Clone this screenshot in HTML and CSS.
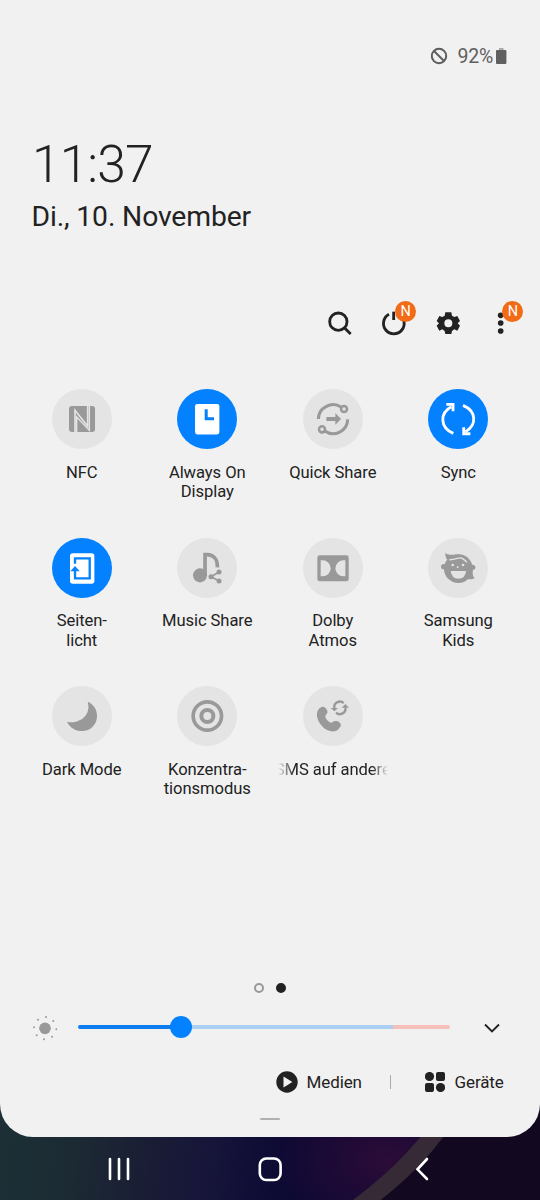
FILE: index.html
```html
<!DOCTYPE html>
<html lang="de">
<head>
<meta charset="utf-8">
<title>Schnelleinstellungen</title>
<link rel="stylesheet" href="styles.css">
</head>
<body>
<main class="panel">
  <div class="status">
    <svg class="status-mute" viewBox="0 0 18 18"><circle cx="9" cy="9" r="7.2"/><path d="M4 4L14 14"/></svg>
    <span class="percent">92%</span>
    <svg class="battery" viewBox="0 0 12 18"><path class="cap" d="M4 1h4.5v2H4z"/><rect x="1" y="3" width="10.4" height="14" rx="1"/></svg>
  </div>
  <header class="clock">
    <div class="time">11:37</div>
    <div class="date">Di., 10. November</div>
  </header>
  <nav class="tools">
    <div class="tool"><svg viewBox="0 0 102 102"><circle class="line" cx="46" cy="47" r="26"/><path class="line" d="M64 65L83 84"/></svg></div>
    <div class="tool"><svg viewBox="0 0 102 102"><path class="line" d="M36 25A31 31 0 1 0 65 25"/><path class="line" d="M50 17V42"/></svg><span class="badge">N</span></div>
    <div class="tool"><svg viewBox="0 0 102 102"><path fill-rule="evenodd" d="M43 19H61L63 29L70 33L79 30L87 45L80 52L87 59L79 74L70 70L63 75L61 84H43L41 75L34 70L25 74L17 59L24 52L17 45L25 30L34 33L41 29ZM52 40A12 12 0 1 0 52 64A12 12 0 1 0 52 40Z"/></svg></div>
    <div class="tool"><svg viewBox="0 0 102 102"><circle cx="50" cy="28" r="8.5"/><circle cx="50" cy="51" r="8.5"/><circle cx="50" cy="75" r="8.5"/></svg><span class="badge">N</span></div>
  </nav>
  <section class="tiles">
    <div class="tile"><svg class="disc" viewBox="0 0 181 181"><rect class="fill" x="51" y="51" width="78" height="78" rx="9"/><path class="cut" d="M69 131V64L107 112V49" stroke-width="5"/><path class="cut" d="M74 131V84L112 124V49" stroke-width="4"/></svg><span>NFC</span></div>
    <div class="tile on"><svg class="disc" viewBox="0 0 181 181"><rect class="fill" x="54" y="45" width="73" height="91" rx="7"/><path class="cut" d="M87.5 61V89.5H111" stroke-width="9"/></svg><span>Always On<br>Display</span></div>
    <div class="tile"><svg class="disc" viewBox="0 0 181 181"><path class="stroke" stroke-width="9" d="M46 90A44 44 0 0 1 115 55M134 91A44 44 0 0 1 65 126"/><circle class="stroke" stroke-width="7.5" cx="123" cy="60" r="9"/><circle class="stroke" stroke-width="7.5" cx="57" cy="121" r="9"/><path class="fill" d="M70 84H97V72L114 90L97 107V96H70Z"/></svg><span>Quick Share</span></div>
    <div class="tile on"><svg class="disc" viewBox="0 0 181 181"><path class="stroke" stroke-width="8.5" d="M76 133C36 117 34 72 70 53M105 49C145 66 148 108 112 128"/><path class="stroke" stroke-width="8.5" d="M55 46H75V67M107 115V134H127"/></svg><span>Sync</span></div>
    <div class="tile on"><svg class="disc" viewBox="0 0 181 181"><rect class="fill" x="54" y="46" width="73" height="91" rx="8"/><path class="cut" d="M69 77V61H113V121H69V92" stroke-width="7"/><path class="cutfill" d="M55 100L69 84L83 100Z"/></svg><span>Seiten-<br>licht</span></div>
    <div class="tile"><svg class="disc" viewBox="0 0 181 181"><circle class="fill" cx="69" cy="112" r="21"/><path class="stroke" stroke-width="11" d="M84 112V50H93C113 52 122 68 121 88"/><path class="stroke" stroke-width="5" d="M126 102L102 116L126 129"/><circle class="fill" cx="102" cy="116" r="7.5"/><circle class="fill" cx="126" cy="102" r="7.5"/><circle class="fill" cx="126" cy="129" r="7.5"/></svg><span>Music Share</span></div>
    <div class="tile"><svg class="disc" viewBox="0 0 181 181"><rect class="fill" x="43" y="52" width="94" height="78" rx="7"/><path class="cutfill" d="M53 67H59A24 24 0 0 1 59 115H53ZM127 67H121A24 24 0 0 0 121 115H127Z"/></svg><span>Dolby<br>Atmos</span></div>
    <div class="tile"><svg class="disc" viewBox="0 0 181 181"><circle class="fill" cx="91" cy="92" r="43"/><circle class="fill" cx="47" cy="86" r="8"/><circle class="fill" cx="134" cy="88" r="8"/><path class="fill" d="M52 45Q58 52 73 50H94L65 70Q51 65 52 45ZM134 92Q132 113 140 121Q130 126 117 122Z"/><path class="cut" stroke-width="4" d="M64 65C78 67 91 58 99 60C105 61 111 67 117 73"/><path class="cutfill" d="M68 99H114Q112 122 91 122Q71 122 68 99Z"/><circle class="cutfill" cx="74" cy="81" r="4"/><circle class="cutfill" cx="105" cy="81" r="4"/><circle class="cutfill" cx="89" cy="88" r="3"/></svg><span>Samsung<br>Kids</span></div>
    <div class="tile"><svg class="disc" viewBox="0 0 181 181"><path class="fill" d="M107 47C125 55 135 70 135 90A45 45 0 0 1 90 135C70 135 52 124 45 107C78 115 119 91 107 47Z"/></svg><span>Dark Mode</span></div>
    <div class="tile"><svg class="disc" viewBox="0 0 181 181"><circle class="stroke" stroke-width="11" cx="91" cy="90" r="42.5"/><circle class="stroke" stroke-width="12" cx="91" cy="90" r="18"/></svg><span>Konzentra-<br>tionsmodus</span></div>
    <div class="tile"><svg class="disc" viewBox="0 0 181 181"><path class="fill" d="M50 66L58 62Q67 61 72 73Q76 80 69 86Q64 91 72 102Q82 113 88 109Q94 102 105 106Q116 113 113 121L105 131Q92 141 72 132Q48 118 42 92Q40 76 50 66Z"/><path class="stroke" stroke-width="7" d="M94 67A17 17 0 0 1 122 51M127 64A17 17 0 0 1 99 80"/><path class="fill" d="M83 66H105L94 76ZM116 65H138L127 54Z"/></svg><span class="marquee">SMS auf andere</span></div>
  </section>
  <div class="pager"><i></i><i class="current"></i></div>
  <div class="brightness">
    <svg class="sun" viewBox="0 0 78 78"><circle cx="39" cy="40" r="17.5"/><g><circle cx="42" cy="6" r="3"/><circle cx="64" cy="18" r="3"/><circle cx="73" cy="43" r="3"/><circle cx="60" cy="65" r="3"/><circle cx="36" cy="73" r="3"/><circle cx="14" cy="61" r="3"/><circle cx="6" cy="37" r="3"/><circle cx="18" cy="14" r="3"/></g></svg>
    <div class="track"><div class="used"></div><div class="free"></div><div class="hot"></div><div class="thumb"></div></div>
    <svg class="chevron" viewBox="0 0 18 12"><path d="M2 2.5L9 9.5L16 2.5"/></svg>
  </div>
  <footer class="links">
    <svg class="play" viewBox="0 0 22 22"><circle cx="11" cy="11" r="10.7"/><path d="M7.5 5.5L16.4 11L7.5 16.5Z"/></svg>
    <span class="media">Medien</span>
    <i class="divider"></i>
    <svg class="devices" viewBox="0 0 20 20"><circle cx="4.5" cy="4.5" r="4.6"/><rect x="11" width="9" height="9" rx="2"/><rect y="11" width="9" height="9" rx="2"/><circle cx="15.5" cy="15.5" r="4.6"/></svg>
    <span>Geräte</span>
  </footer>
  <div class="handle"></div>
</main>
<div class="navbar">
  <svg class="wall" viewBox="0 0 540 100" preserveAspectRatio="none"><path d="M456 0Q426 58 358 108" fill="none" stroke="#352a35" stroke-width="19"/><path d="M466 0Q436 60 370 108H540V0Z" fill="#120820"/></svg>
  <svg class="navicon" viewBox="0 0 30 30"><path d="M6 5V25M15 5V25M24 5V25"/></svg>
  <svg class="navicon" viewBox="0 0 30 30"><rect x="4.8" y="4.5" width="20.8" height="21.5" rx="6.5"/></svg>
  <svg class="navicon" viewBox="0 0 30 30"><path d="M21 5L11.5 15.3L21 25"/></svg>
</div>
</body>
</html>
```
FILE: styles.css
```css
* { box-sizing: border-box; }
body {
  margin: 0;
  width: 540px;
  height: 1200px;
  overflow: hidden;
  display: flex;
  flex-direction: column;
  font-family: Roboto, sans-serif;
  color: #222;
  background: #120820;
}
svg { display: block; flex: none; }
.panel {
  height: 1137px;
  flex: none;
  position: relative;
  z-index: 1;
  background: #f1f1f1;
  border-radius: 0 0 33px 33px;
  display: flex;
  flex-direction: column;
}
.status {
  height: 80px;
  padding: 31px 33px 0 0;
  display: flex;
  justify-content: flex-end;
  align-items: center;
  color: #606060;
}
.status-mute { width: 18px; height: 18px; fill: none; stroke: #5d5d5d; stroke-width: 2; margin-right: 9px; }
.percent { font-size: 19.5px; line-height: 22px; letter-spacing: -0.2px; margin: 2px 2px 0 0; }
.battery { width: 12px; height: 18px; fill: #606060; }
.cap { fill: #aaa; }
.clock { height: 200px; padding: 53.5px 0 0 32px; }
.time { font-size: 51.5px; font-weight: 300; line-height: 62px; letter-spacing: -0.9px; }
.date { font-size: 28.3px; line-height: 36px; margin-top: 3px; margin-left: -0.5px; letter-spacing: -0.13px; }
.tools {
  height: 86px;
  display: flex;
  justify-content: flex-end;
  align-items: center;
  padding-right: 12px;
}
.tool { width: 53.6px; display: flex; justify-content: center; position: relative; }
.tool svg { width: 34px; height: 34px; fill: #222; }
.tool .line { fill: none; stroke: #222; stroke-width: 8.5; }
.badge {
  position: absolute;
  left: 28px;
  top: -5px;
  width: 21px;
  height: 21px;
  border-radius: 50%;
  background: #f26b16;
  color: #fff;
  font-size: 14.5px;
  line-height: 22px;
  text-align: center;
}
.tiles {
  height: 613px;
  padding: 23px 19px 0;
  display: grid;
  grid-template-columns: repeat(4, 125.5px);
  grid-template-rows: repeat(3, 148.5px);
}
.tile { display: flex; flex-direction: column; align-items: center; text-align: center; font-size: 16.6px; line-height: 19.5px; letter-spacing: -0.08px; }
.disc { width: 60.4px; height: 60.4px; border-radius: 50%; background: #e4e4e4; margin-bottom: 13.3px; }
.fill { fill: #999; }
.stroke { fill: none; stroke: #999; }
.cut { fill: none; stroke: #e4e4e4; }
.cutfill { fill: #e4e4e4; }
.on .disc { background: #0381fe; }
.on .fill { fill: #fff; }
.on .stroke { stroke: #fff; }
.on .cut { stroke: #0381fe; }
.on .cutfill { fill: #0381fe; }
.marquee {
  width: 110px;
  display: flex;
  justify-content: center;
  white-space: nowrap;
  overflow: hidden;
  -webkit-mask-image: linear-gradient(90deg, transparent, #000 15%, #000 85%, transparent);
  mask-image: linear-gradient(90deg, transparent, #000 15%, #000 85%, transparent);
}
.pager { height: 18px; display: flex; justify-content: center; align-items: center; gap: 11.5px; }
.pager i { width: 10.6px; height: 10.6px; border-radius: 50%; border: 2px solid #999; }
.pager .current { background: #222; border-color: #222; }
.brightness { height: 60px; padding: 0 39px 0 31px; display: flex; align-items: center; }
.sun { width: 26px; height: 26px; fill: #999; margin: 1px 20.5px 0 0.5px; }
.track { width: 372px; height: 4.5px; display: flex; position: relative; }
.used { width: 103px; background: #0e7df0; border-radius: 3px 0 0 3px; }
.free { width: 211.5px; background: #abcff3; }
.hot { flex: 1; background: #f5bfba; border-radius: 0 3px 3px 0; }
.thumb { position: absolute; left: 91.7px; top: -9px; width: 22.6px; height: 22.6px; border-radius: 50%; background: #0381fe; }
.chevron { width: 18px; height: 12px; margin: 2px 0 0 33.5px; fill: none; stroke: #222; stroke-width: 1.9; }
.links { height: 50px; padding-left: 276px; display: flex; align-items: center; font-size: 17px; letter-spacing: -0.1px; }
.play { width: 22px; height: 22px; margin-right: 8.5px; fill: #222; }
.play path { fill: #f1f1f1; }
.media { width: 83.5px; }
.divider { width: 1px; height: 14px; background: #aaa; margin-right: 33.5px; }
.devices { width: 20px; height: 20px; fill: #222; margin-right: 10px; }
.handle { width: 20px; height: 2.4px; border-radius: 1px; margin: 10.5px auto 0 260px; background: #b0b0b0; }
.navbar {
  height: 100px;
  flex: none;
  margin-top: -37px;
  position: relative;
  display: flex;
  padding: 53.5px 0 0 104px;
  background: radial-gradient(ellipse 110px 75px at 385px 60px, rgba(46, 12, 56, 0.95) 0%, transparent 100%), linear-gradient(98deg, #1c3036 0%, #1c2b33 14%, #1a1c35 29%, #17163a 38%, #0d0a34 52%, #0d0733 66%, #160834 100%);
}
.wall { position: absolute; left: 0; top: 0; width: 540px; height: 100px; }
.navicon { position: relative; width: 30px; height: 30px; fill: none; stroke: #fff; stroke-width: 2.6; stroke-linecap: round; margin-right: 121px; }
```
